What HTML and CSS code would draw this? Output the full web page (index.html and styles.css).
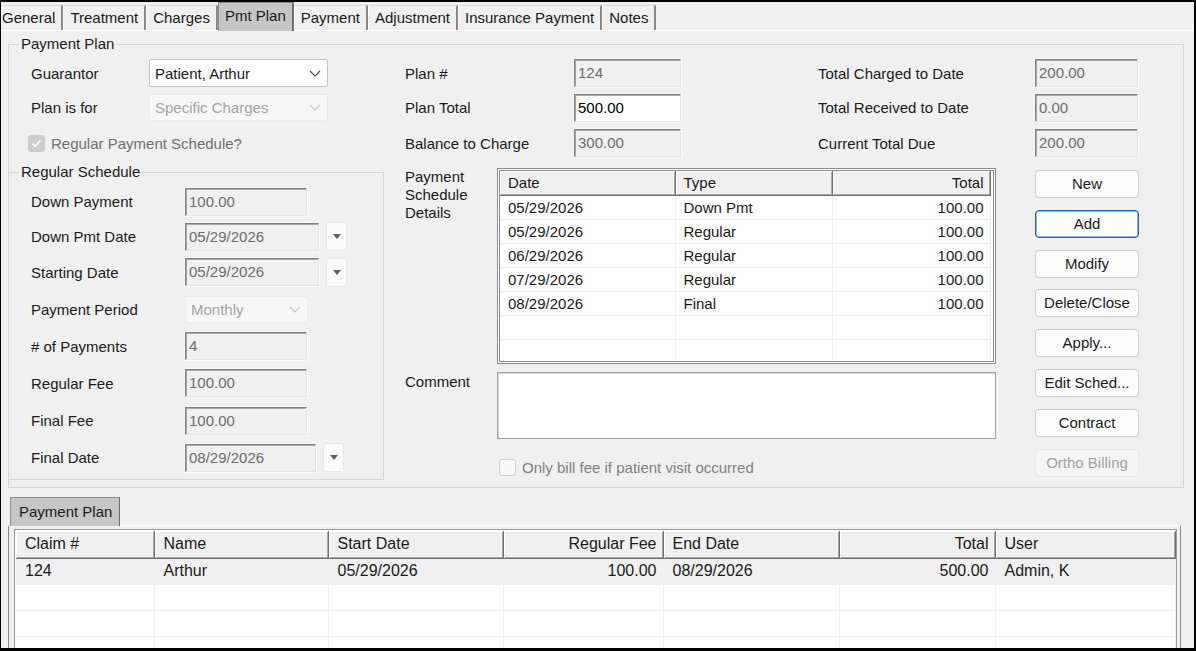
FILE: index.html
```html
<!DOCTYPE html>
<html lang="en">
<head>
    <meta charset="UTF-8">
    <title>Pmt Plan</title>
    <link rel="stylesheet" href="styles.css">
</head>
<body>
<div class="frame">
    <div class="tabs">
        <span class="tab">General</span>
        <span class="tab">Treatment</span>
        <span class="tab">Charges</span>
        <span class="tab active">Pmt Plan</span>
        <span class="tab">Payment</span>
        <span class="tab">Adjustment</span>
        <span class="tab">Insurance Payment</span>
        <span class="tab">Notes</span>
    </div>
    <div class="tab-page">
        <fieldset class="group plan">
            <legend>Payment Plan</legend>
            <div class="plan-top">
                <div class="fields fields-left">
                    <span>Guarantor</span>
                    <div class="combo">Patient, Arthur
                        <svg viewBox="0 0 12 7"><path d="M1 1l5 5 5-5" fill="none" stroke="#444" stroke-width="1.1"/></svg>
                    </div>
                    <span>Plan is for</span>
                    <div class="combo disabled">Specific Charges
                        <svg viewBox="0 0 12 7"><path d="M1 1l5 5 5-5" fill="none" stroke="#c2c2c2" stroke-width="1.1"/></svg>
                    </div>
                    <div class="check">
                        <span class="box on"><svg viewBox="0 0 12 10" width="11" height="9"><path d="M1.5 5l3 3 6-6.5" fill="none" stroke="#fff" stroke-width="1.6"/></svg></span>
                        Regular Payment Schedule?
                    </div>
                </div>
                <div class="fields fields-mid">
                    <span>Plan #</span><div class="tb">124</div>
                    <span>Plan Total</span><div class="tb edit">500.00</div>
                    <span>Balance to Charge</span><div class="tb">300.00</div>
                </div>
                <div class="fields fields-right">
                    <span>Total Charged to Date</span><div class="tb">200.00</div>
                    <span>Total Received to Date</span><div class="tb">0.00</div>
                    <span>Current Total Due</span><div class="tb">200.00</div>
                </div>
            </div>

            <div class="plan-bottom">
                <fieldset class="group regular">
                    <legend>Regular Schedule</legend>
                    <div class="reg-rows">
                        <span>Down Payment</span><div class="tb w-num">100.00</div>
                        <span>Down Pmt Date</span>
                        <div class="date"><div class="tb w-date">05/29/2026</div><span class="drop"></span></div>
                        <span>Starting Date</span>
                        <div class="date"><div class="tb w-date">05/29/2026</div><span class="drop"></span></div>
                        <span>Payment Period</span>
                        <div class="combo disabled w-combo">Monthly
                            <svg viewBox="0 0 12 7"><path d="M1 1l5 5 5-5" fill="none" stroke="#c2c2c2" stroke-width="1.1"/></svg>
                        </div>
                        <span># of Payments</span><div class="tb w-num">4</div>
                        <span>Regular Fee</span><div class="tb w-num">100.00</div>
                        <span>Final Fee</span><div class="tb w-num">100.00</div>
                        <span>Final Date</span>
                        <div class="date"><div class="tb w-date short">08/29/2026</div><span class="drop"></span></div>
                    </div>
                </fieldset>

                <div class="details">
                    <div class="cap">Payment<br>Schedule<br>Details</div>
                    <div class="listview sched">
                        <table>
                            <thead>
                            <tr><th class="c-date">Date</th><th class="c-type">Type</th><th class="c-total num">Total</th></tr>
                            </thead>
                            <tbody>
                            <tr><td>05/29/2026</td><td>Down Pmt</td><td class="num">100.00</td></tr>
                            <tr><td>05/29/2026</td><td>Regular</td><td class="num">100.00</td></tr>
                            <tr><td>06/29/2026</td><td>Regular</td><td class="num">100.00</td></tr>
                            <tr><td>07/29/2026</td><td>Regular</td><td class="num">100.00</td></tr>
                            <tr><td>08/29/2026</td><td>Final</td><td class="num">100.00</td></tr>
                            <tr><td></td><td></td><td></td></tr>
                            <tr><td></td><td></td><td></td></tr>
                            </tbody>
                        </table>
                    </div>
                    <div class="btns">
                        <span class="btn">New</span>
                        <span class="btn focus">Add</span>
                        <span class="btn">Modify</span>
                        <span class="btn">Delete/Close</span>
                        <span class="btn">Apply...</span>
                        <span class="btn">Edit Sched...</span>
                        <span class="btn">Contract</span>
                        <span class="btn off">Ortho Billing</span>
                    </div>
                    <div class="cap gap-top">Comment</div>
                    <div class="comment"></div>
                    <div class="check only"><span class="box"></span>Only bill fee if patient visit occurred</div>
                </div>
            </div>
        </fieldset>

        <div class="subtabs"><span class="subtab">Payment Plan</span></div>
        <div class="subpage">
            <div class="listview plans">
                <table>
                    <thead>
                    <tr>
                        <th class="p-claim">Claim #</th>
                        <th class="p-name">Name</th>
                        <th class="p-start">Start Date</th>
                        <th class="p-fee num">Regular Fee</th>
                        <th class="p-end">End Date</th>
                        <th class="p-total num">Total</th>
                        <th class="p-user">User</th>
                    </tr>
                    </thead>
                    <tbody>
                    <tr class="selected">
                        <td>124</td><td>Arthur</td><td>05/29/2026</td><td class="num">100.00</td>
                        <td>08/29/2026</td><td class="num">500.00</td><td>Admin, K</td>
                    </tr>
                    <tr><td></td><td></td><td></td><td></td><td></td><td></td><td></td></tr>
                    <tr><td></td><td></td><td></td><td></td><td></td><td></td><td></td></tr>
                    <tr><td></td><td></td><td></td><td></td><td></td><td></td><td></td></tr>
                    </tbody>
                </table>
            </div>
        </div>
    </div>
</div>
</body>
</html>
```

FILE: styles.css
```css
*{
    box-sizing: border-box;
}
body{
    margin: 0;
    background: #000;
    font-family: "Liberation Sans", Arial, sans-serif;
    font-size: 15px;
    color: #1a1a1a;
}
.frame{
    width: 1196px;
    height: 651px;
    border: solid #000;
    border-width: 2px 2px 3px 1px;
    background: #f0f0f0;
    overflow: hidden;
}

/* top tab strip */
.tabs{
    display: flex;
    align-items: flex-end;
    height: 28px;
    margin-left: -6px;
}
.tab{
    height: 25px;
    line-height: 23px;
    padding: 0 6px;
    background: #f0f0f0;
    border: 1px solid #dadada;
    border-left-color: #fff;
    border-right: 2px solid #8a8a8a;
    border-bottom: 0;
    white-space: nowrap;
}
.tab.active{
    position: relative;
    height: 29px;
    margin-bottom: -1px;
    line-height: 26px;
    background: #c6c6c6;
    border-color: #8c8c8c;
    border-right-color: #6e6e6e;
}
.tab-page{
    border-top: 1px solid #fff;
    padding: 4px 0 0 7px;
}

/* group boxes */
.group{
    margin: 0;
    padding: 0;
    min-width: 0;
    border: 1px solid #d5d5d5;
}
.group legend{
    margin-left: 10px;
    padding: 0 2px;
    line-height: 18px;
}
.plan{
    width: 1176px;
    padding-bottom: 7px;
}
.plan-top{
    display: flex;
    padding-top: 3px;
}
.fields{
    display: grid;
    grid-template-rows: 34px 35px 36px;
    align-items: center;
}
.fields-left{
    grid-template-columns: 118px 179px;
    margin-left: 22px;
}
.fields-mid{
    grid-template-columns: 169px 107px;
    margin-left: 77px;
}
.fields-right{
    grid-template-columns: 217px 103px;
    margin-left: 137px;
}
.fields .check{
    grid-column: 1 / 3;
    margin-left: -3px;
}

/* inputs */
.combo{
    display: flex;
    align-items: center;
    justify-content: space-between;
    height: 28px;
    padding: 0 6px 0 5px;
    background: #fff;
    border: 1px solid #c4c4c4;
    border-radius: 2px;
    white-space: nowrap;
}
.combo svg{
    width: 12px;
    height: 7px;
}
.combo.disabled{
    height: 27px;
    background: #f7f7f7;
    border-color: #ebebeb;
    color: #a3a3a3;
}
.w-combo{
    width: 123px;
}
.tb{
    height: 28px;
    padding: 0 3px;
    line-height: 25px;
    background: #f0f0f0;
    color: #6d6d6d;
    border: 1px solid;
    border-color: #7f7f7f #e3e3e3 #e3e3e3 #7f7f7f;
    box-shadow: inset 1px 1px 0 #a8a8a8, 0 0 0 1px #f9f9f9;
    white-space: nowrap;
}
.tb.edit{
    background: #fff;
    color: #000;
}
.w-num{
    width: 122px;
}
.w-date{
    width: 134px;
}
.w-date.short{
    width: 131px;
}
.date{
    display: flex;
    align-items: center;
    gap: 7px;
}
.drop{
    display: flex;
    align-items: center;
    justify-content: center;
    width: 21px;
    height: 29px;
    background: #fbfbfb;
    border: 1px solid #e6e6e6;
    border-radius: 3px;
}
.drop::after{
    content: "";
    border: 4px solid transparent;
    border-top: 5px solid #5f5f5f;
    border-bottom: 0;
}
.check{
    display: flex;
    align-items: center;
    gap: 6px;
    color: #6f6f6f;
    white-space: nowrap;
}
.box{
    display: flex;
    align-items: center;
    justify-content: center;
    width: 17px;
    height: 17px;
    background: #f7f7f7;
    border: 1px solid #cdcdcd;
    border-radius: 3px;
}
.box.on{
    background: #cccccc;
    border-color: #cccccc;
}

/* regular schedule */
.plan-bottom{
    display: flex;
    align-items: flex-start;
}
.regular{
    width: 376px;
    margin: 2px 0 0 -1px;
}
.reg-rows{
    display: grid;
    grid-template-columns: 154px auto;
    grid-template-rows: 35px 35px 36px 38px 36px 38px 37px 37px;
    align-items: center;
    justify-items: start;
    padding: 3px 0 3px 22px;
}

/* schedule details */
.details{
    display: grid;
    grid-template-columns: 92px 499px 1fr;
    align-items: start;
    margin-left: 21px;
    padding-top: 7px;
}
.cap{
    line-height: 18px;
}
.gap-top{
    margin-top: 9px;
}
.comment{
    height: 67px;
    margin-top: 8px;
    background: #fff;
    border: 1px solid #9f9f9f;
    box-shadow: inset 1px 1px 0 #d8d8d8;
}
.check.only{
    grid-column: 2;
    margin-top: 20px;
    padding-left: 2px;
    color: #808080;
}
.btns{
    grid-column: 3;
    grid-row: 1 / 4;
    display: flex;
    flex-direction: column;
    gap: 11.8px;
    padding: 2px 0 0 39px;
}
.btn{
    width: 104px;
    height: 28px;
    line-height: 26px;
    text-align: center;
    background: #fdfdfd;
    border: 1px solid #cdcdcd;
    border-radius: 4px;
}
.btn.focus{
    border-color: #1565c0;
    box-shadow: inset 0 0 0 1px #8fb9e8;
}
.btn.off{
    color: #a0a0a0;
    background: #f5f5f5;
    border-color: #e6e6e6;
}

/* list views */
.listview{
    background: #fff;
    overflow: hidden;
}
.listview table{
    border-collapse: collapse;
    table-layout: fixed;
}
.listview th{
    font-weight: normal;
    text-align: left;
    background: #f0f0f0;
    border-right: 1px solid #6e6e6e;
    border-bottom: 1px solid #6e6e6e;
    box-shadow: inset 1px 1px 0 #fff, inset -1px -1px 0 #a8a8a8;
    white-space: nowrap;
}
.listview td{
    border-right: 1px solid #f0f0f0;
    border-bottom: 1px solid #f0f0f0;
    white-space: nowrap;
}
.listview .num{
    text-align: right;
}
.sched{
    height: 196px;
    border: 3px double #8e8e8e;
}
.sched table{
    width: 490px;
}
.sched th{
    height: 24px;
    padding: 0 6px 0 8px;
}
.sched td{
    height: 24px;
    padding: 0 6px 0 8px;
}
.c-date{
    width: 175px;
}
.c-type{
    width: 157px;
}
.c-total{
    width: 158px;
}

/* bottom tab */
.subtabs{
    display: flex;
    margin: 9px 0 0 2px;
}
.subtab{
    position: relative;
    width: 110px;
    height: 29px;
    margin-bottom: -1px;
    padding-left: 8px;
    line-height: 28px;
    background: #c6c6c6;
    border: 1px solid #8a8a8a;
    border-right-color: #6a6a6a;
    border-bottom: 0;
}
.subpage{
    width: 1173px;
    height: 130px;
    padding: 3px 0 0 5px;
    border: 1px solid #8a8a8a;
    border-top-color: #fff;
    border-bottom: 0;
}
.plans{
    width: 1163px;
    height: 125px;
    padding: 1px;
    border: 1px solid #9a9a9a;
    font-size: 16px;
}
.plans table{
    width: 1159px;
}
.plans th{
    height: 27px;
    padding: 0 6px 0 9px;
}
.plans td{
    height: 26px;
    padding: 0 6px 0 9px;
}
.plans .selected td{
    background: #f0f0f0;
}
.p-claim{ width: 138px; }
.p-name{ width: 174px; }
.p-start{ width: 175px; }
.p-fee{ width: 160px; }
.p-end{ width: 176px; }
.p-total{ width: 156px; }
.p-user{ width: 180px; }
```
